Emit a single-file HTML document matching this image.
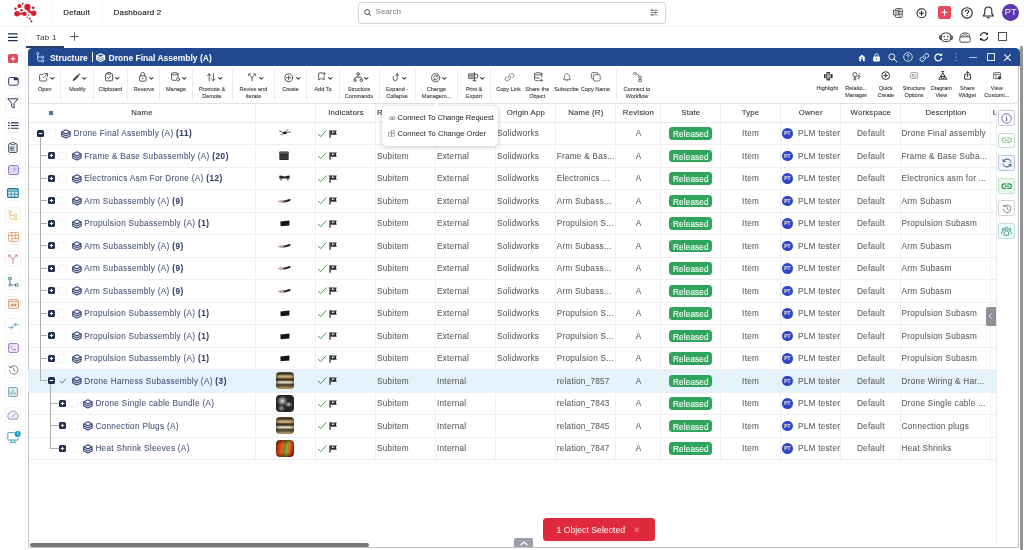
<!DOCTYPE html>
<html><head><meta charset="utf-8"><title>Structure</title>
<style>
*{box-sizing:border-box;margin:0;padding:0}
html,body{width:1024px;height:550px;overflow:hidden;background:#fff}
body{position:relative;font-family:"Liberation Sans",sans-serif;color:#444;font-size:8.2px}
#app{position:absolute;left:0;top:0;width:1024px;height:550px;will-change:transform}
svg{position:absolute;overflow:visible}
#top{position:absolute;left:0;top:0;width:1024px;height:26.5px;border-bottom:1px solid #f0f0f0}
#top .t{position:absolute;top:7.5px;font-size:8px;color:#1c1c1c;line-height:10px;white-space:nowrap;letter-spacing:.18px;-webkit-text-stroke:.15px #1c1c1c}
#top .vs{position:absolute;top:0;width:1px;height:25.5px;background:#f8f8f8}
#search{position:absolute;left:358.2px;top:1.5px;width:307.6px;height:22.2px;border:1px solid #d0d3d6;border-radius:3.5px}
#search span{position:absolute;left:16.4px;top:4.6px;font-size:8px;line-height:10px;color:#7a7a7a;letter-spacing:0}
#side{position:absolute;left:0;top:26.5px;width:26px;height:524px;border-right:1px solid #f1f1f1}
.sb{position:absolute;left:4.5px;width:16px;height:16px;border:1px solid #f3f3f3;border-radius:3px}
#tabs .tab{position:absolute;left:35.8px;top:32.5px;font-size:8px;line-height:10px;color:#333;letter-spacing:.25px}
#tabs .ul{position:absolute;left:26px;top:45.8px;width:38px;height:2px;background:#2b406b}
#panel{position:absolute;left:28px;top:50px;width:991px;height:497.5px;border:1px solid #bfc1c3;border-top:none;border-radius:0 0 2.5px 2.5px}
#vbar{position:absolute;left:1020.2px;top:46px;width:2.7px;height:503.5px;background:#939594;border-radius:1px}
#phead{position:absolute;left:28px;top:47.8px;width:991.5px;height:18px;background:#22498f;border-radius:4.5px 4.5px 0 0}
#phead .ttl{position:absolute;top:5.5px;font-size:8.5px;line-height:10px;font-weight:bold;color:#fff;white-space:nowrap}
#toolbar{position:absolute;left:29px;top:66px;width:990px;height:38px;border-bottom:1px solid #e2e2e6}
.tb{position:absolute;font-size:5.55px;line-height:7.1px;color:#3a3a3a;-webkit-text-stroke:.1px #3a3a3a;text-align:center;white-space:nowrap;transform:translateX(-50%)}
.tsep{position:absolute;top:3px;width:1px;height:31.5px;background:#ebebeb}
#grid{position:absolute;left:0;top:0}
.hrow{position:absolute;left:0;top:104px;height:18px;width:1000px}
.hc{position:absolute;top:0;height:18.5px;text-align:center;font-size:7.8px;letter-spacing:.17px;line-height:18.2px;color:#2e2e2e;white-space:nowrap;overflow:hidden;-webkit-text-stroke:.07px #2e2e2e}
.hsel{position:absolute;left:49px;top:6.6px;width:4px;height:4px;background:#4a7a9c;border-radius:.5px;box-shadow:0 0 0 1.6px #eef2f6}
.row{position:absolute;left:0;width:1000px;height:22.5px}
.row .c{position:absolute;top:0;height:22.5px;text-align:center;line-height:24.8px;font-size:8.2px;letter-spacing:.26px;color:#5e5e5e;-webkit-text-stroke:.08px #5e5e5e;white-space:nowrap;overflow:hidden}
.row .c.l{text-align:left;padding-left:1px}
.row.sel .c{background:#e4f3fb}
.exp{top:7.9px}
.exp i{position:absolute;left:1.7px;top:2.95px;width:3.6px;height:1.1px;background:#fff}
.exp i.pl:after{content:"";position:absolute;left:1.25px;top:-1.25px;width:1.1px;height:3.6px;background:#fff}
.cb{position:absolute;top:7px;width:8.8px;height:8.8px;border:1px solid #f3f3f5;border-radius:1.5px;background:#fff}
.ck{top:7.5px}
.ico{top:6.7px;color:#3f548c}
.nm{position:absolute;top:0;height:22.5px;overflow:hidden;line-height:24.8px;font-size:8.2px;letter-spacing:.3px;color:#4a5577;-webkit-text-stroke:.08px #4a5577;white-space:nowrap}
.nm b{color:#2f3c66;letter-spacing:.55px}
.ind{left:1px;top:6.5px}
.rel{display:inline-block;vertical-align:top;margin-top:5px;height:12.6px;line-height:15.6px;overflow:hidden;padding:0 3.5px;background:#2fa55b;color:#fff;border-radius:3.4px;font-size:8.2px;letter-spacing:.14px;-webkit-text-stroke:.12px #fff}
.av{position:absolute;left:1.6px;top:6.1px;width:10.6px;height:10.6px;border-radius:50%;background:#2f47c6;color:#fff;font-size:4.8px;letter-spacing:0;line-height:11.4px;text-align:center;font-weight:bold;overflow:hidden}
.ow{position:absolute;left:17.5px;top:0}
.th{display:inline-block;vertical-align:top}
.t1{width:9px;height:4px;background:#333;border-radius:2px;margin-top:9px}
.t2{width:9px;height:8px;background:#2a2a2a;border-radius:1px;margin-top:7px}
.t3{width:10px;height:4px;background:#2a2a2a;border-radius:1px;margin-top:9px}
.t4{width:10px;height:3px;background:#222;border-radius:2px;transform:rotate(-12deg);margin-top:10px}
.t5{width:9px;height:5px;background:#111;border-radius:1px;margin-top:9px}
.p1,.p2,.p3{position:absolute;left:20.1px;top:2.6px;width:18px;height:17.2px;border-radius:4px}
.p1{background:linear-gradient(90deg,rgba(40,30,20,.45) 0%,rgba(0,0,0,0) 22%,rgba(0,0,0,0) 78%,rgba(40,30,20,.4) 100%),linear-gradient(180deg,#5a4a36 0%,#3a2e22 12%,#b9a56e 22%,#cdb87e 30%,#5a3a28 40%,#3a2a22 48%,#e8e0c8 58%,#cfc8b0 64%,#4a4030 74%,#6a5a38 84%,#b89c66 94%,#98804e 100%)}
.p2{background:radial-gradient(ellipse at 35% 35%,#e8e8e8 0%,#8a8a8a 14%,rgba(40,40,40,0) 32%),radial-gradient(ellipse at 70% 55%,#bdbdbd 0%,rgba(60,60,60,0) 22%),radial-gradient(ellipse at 30% 78%,#9a9a9a 0%,rgba(60,60,60,0) 20%),#262626}
.p3{background:linear-gradient(180deg,rgba(30,10,0,.5) 0%,rgba(0,0,0,0) 25%,rgba(0,0,0,0) 75%,rgba(30,10,0,.55) 100%),linear-gradient(100deg,#5a1a0a 0%,#c83a10 20%,#e85a1a 35%,#6a8a2a 50%,#8ab03a 58%,#e8601a 72%,#b8300a 85%,#4a1408 100%)}
.vl{position:absolute;top:104px;width:1px;height:355.5px;background:#f0f0f4}
.hl{position:absolute;left:29px;width:967px;height:1px;background:#ededf2}
.rb{position:absolute;left:998.3px;width:16.7px;height:15.8px;border:.9px solid #999;border-radius:2.2px;background:#fff}
.tl{position:absolute;background:#adadad}
#dd{position:absolute;left:381.6px;top:105.5px;width:116.3px;height:40.6px;background:#fff;border-radius:4.5px;box-shadow:0 1px 5px rgba(0,0,0,.22),0 0 1px rgba(0,0,0,.15)}
#dd .it{position:absolute;left:16px;font-size:7.5px;line-height:10px;color:#333;white-space:nowrap;-webkit-text-stroke:.07px #333}
#toast{position:absolute;left:543px;top:518.3px;width:111.8px;height:22.5px;background:#e0293b;border-radius:3.5px;color:#fff;font-size:8.7px;line-height:25.6px;overflow:hidden;letter-spacing:0}

</style></head>
<body>
<div id="app">
<svg width="0" height="0" style="position:absolute">
<defs>
<g id="layers" fill="none" stroke-linejoin="round" stroke-linecap="round">
<path d="M11 1.8 L19.6 6 Q20.4 6.5 20.4 7.4 V14.8 Q20.4 15.7 19.6 16.2 L11 20.4 L2.4 16.2 Q1.6 15.7 1.6 14.8 V7.4 Q1.6 6.5 2.4 6 Z"/>
<path d="M2 6.8 L11 11 L20 6.8"/>
<path d="M1.8 11.2 L11 15.6 L20.2 11.2"/>
</g>
<g id="ind">
<path d="M1.3 5.2 L3.8 7.6 L9 1.8" fill="none" stroke="#3f9d45" stroke-width="1" stroke-linecap="round" stroke-linejoin="round"/>
<path d="M13 1.2 V8.8" stroke="#2a2a2a" stroke-width="1.3" fill="none"/>
<path d="M13.4 1.4 H19.8 L18.9 3.5 L19.8 5.8 H13.4 Z" fill="#2a2a2a"/>
<rect x="15" y="2.5" width="1.6" height="1.6" fill="#fff"/>
<rect x="16.6" y="2.5" width="1.4" height=".8" fill="#888"/>
</g>
<path id="chev" d="M0.6 0.6 L2.3 2.2 L4 0.6" fill="none" stroke="#3c3c3c" stroke-width="1.05" stroke-linecap="round" stroke-linejoin="round"/>
</defs>
</svg>
<div id="top">
<div class="vs" style="left:51px"></div><div class="vs" style="left:102px"></div>
<svg style="left:8px;top:0" width="50" height="27" viewBox="0 0 50 27">
<g fill="#d5212f">
<circle cx="11.5" cy="6.1" r="2.1"/>
<ellipse cx="19.4" cy="7" rx="3.1" ry="3.3"/>
<circle cx="9" cy="13.7" r="2.7"/>
<circle cx="16.4" cy="13.7" r="2.3"/>
<rect x="9" y="12.7" width="7.4" height="2"/>
<circle cx="25.7" cy="13.2" r="2.7"/>
<path d="M20 8.5 L24.5 12 L23 14 L18.5 10 Z"/>
</g>
<g fill="#a8203a">
<circle cx="14.7" cy="3.8" r="1"/>
<circle cx="7.6" cy="8.8" r="1.2"/>
<circle cx="13.5" cy="10.3" r="1.2"/>
<circle cx="25.2" cy="7.8" r="1.3"/>
<circle cx="20.3" cy="12.5" r=".6"/>
<circle cx="20.8" cy="15" r=".7"/>
<circle cx="19.1" cy="17.2" r=".7"/>
<circle cx="21.8" cy="18.4" r="1"/>
<circle cx="23.3" cy="21.3" r="1.1"/>
</g></svg>
<div class="t" style="left:63.2px">Default</div>
<div class="t" style="left:113.6px">Dashboard 2</div>
<div id="search"><svg style="left:5px;top:6.6px" width="7.4" height="7.4" viewBox="0 0 7.4 7.4"><circle cx="3.1" cy="3.1" r="2.45" fill="none" stroke="#3a4a66" stroke-width=".95"/><path d="M4.9 4.9 L6.7 6.7" stroke="#3a4a66" stroke-width=".95" stroke-linecap="round"/></svg><span>Search</span>
<svg style="left:290.6px;top:6.6px" width="8" height="7" viewBox="0 0 8 7"><g stroke="#4a5060" stroke-width=".7" fill="none"><path d="M0.3 1.2H7.7M0.3 3.5H7.7M0.3 5.8H7.7"/><path d="M2.2 .3V2.1M5.4 2.6V4.4M2.2 4.9V6.7" stroke-width="1"/></g></svg></div>
<svg style="left:893px;top:8px" width="10" height="10" viewBox="0 0 10 10"><g fill="none" stroke="#444" stroke-width=".9"><rect x="2.5" y=".6" width="6.8" height="8.8" rx=".8"/><rect x=".6" y="2.3" width="4.6" height="4.6" fill="#fff"/><path d="M5.2 3.5H9.3M5.2 6.3H9.3M6.8 .6V9.4M1.8 3.4L4 5.8M4 3.4L1.8 5.8" stroke-width=".7"/></g></svg>
<svg style="left:916px;top:7.5px" width="11" height="11" viewBox="0 0 11 11"><circle cx="5.5" cy="5.3" r="4.5" fill="none" stroke="#222" stroke-width="1.1"/><path d="M5.5 2.8V7.8M3 5.3H8" stroke="#222" stroke-width="1.1"/></svg>
<div style="position:absolute;left:937.7px;top:6px;width:13px;height:12.5px;background:#e8485c;border-radius:2px"></div>
<svg style="left:937.7px;top:6px" width="13" height="12.5" viewBox="0 0 13 12.5"><path d="M6.5 3.2V9.4M3.4 6.3H9.6" stroke="#fff" stroke-width="1.1"/></svg>
<svg style="left:960.5px;top:6.7px" width="12" height="12" viewBox="0 0 12 12"><circle cx="6" cy="5.9" r="5.2" fill="none" stroke="#222" stroke-width="1.1"/><path d="M4.3 4.7C4.3 3.6 5.1 3 6 3C6.9 3 7.7 3.6 7.7 4.5C7.7 5.6 6 5.7 6 7" fill="none" stroke="#222" stroke-width="1.1"/><circle cx="6" cy="8.6" r=".7" fill="#222"/></svg>
<svg style="left:982.2px;top:5.8px" width="12.6" height="13.6" viewBox="0 0 12 13"><path d="M6 .9C3.7 .9 2.6 2.7 2.6 4.6V7.3L1.2 9.6H10.8L9.4 7.3V4.6C9.4 2.7 8.3 .9 6 .9Z" fill="none" stroke="#222" stroke-width="1" stroke-linejoin="round"/><path d="M4.8 10.6C5 11.6 7 11.6 7.2 10.6" fill="none" stroke="#222" stroke-width="1"/></svg>
<div style="position:absolute;left:1002.3px;top:4px;width:17px;height:17px;border-radius:50%;background:#5b36b6;color:#fff;font-size:9.2px;line-height:17.6px;text-align:center;letter-spacing:.1px">PT</div>
</div>
<div id="side"></div>
<svg style="left:8px;top:33px" width="10" height="9" viewBox="0 0 10 9"><path d="M0 .9H9.6M0 4.3H9.6M0 7.7H9.6" stroke="#1f2d4e" stroke-width="1.3"/></svg>
<div style="position:absolute;left:7.6px;top:53.5px;width:10px;height:9.6px;background:#e0475b;border-radius:1.8px"></div><svg style="left:7.6px;top:53.5px" width="10" height="9.6" viewBox="0 0 10 9.6"><path d="M5 2.4V7.2M2.6 4.8H7.4" stroke="#fff" stroke-width="1"/></svg>
<div class="sb" style="top:72.5px"></div>
<div class="sb" style="top:95px"></div>
<div class="sb" style="top:117px"></div>
<div class="sb" style="top:139px"></div>
<div class="sb" style="top:162px"></div>
<div class="sb" style="top:185px"></div>
<div class="sb" style="top:207px"></div>
<div class="sb" style="top:229px"></div>
<div class="sb" style="top:251px"></div>
<div class="sb" style="top:274px"></div>
<div class="sb" style="top:296px"></div>
<div class="sb" style="top:318px"></div>
<div class="sb" style="top:340px"></div>
<div class="sb" style="top:362px"></div>
<div class="sb" style="top:384px"></div>
<div class="sb" style="top:407px"></div>
<div class="sb" style="top:429px"></div>
<svg style="left:7.5px;top:76.5px" width="11" height="9" viewBox="0 0 11 9"><rect x=".6" y=".6" width="9.6" height="7.6" rx="1.6" fill="none" stroke="#1f2d4e" stroke-width=".95"/><path d="M5.8 1H8.8Q9.8 1 9.8 2V3.2H5.8Z" fill="#1f2d4e"/></svg>
<svg style="left:7px;top:98px" width="12" height="11" viewBox="0 0 12 11"><path d="M.8 .8H11L7.1 5.4V10L4.7 8.6V5.4Z" fill="none" stroke="#1f2d4e" stroke-width=".95" stroke-linejoin="round"/></svg>
<svg style="left:7.5px;top:121.5px" width="11" height="7" viewBox="0 0 11 7"><path d="M3 .8H10.6M3 3.5H10.6M3 6.2H10.6" stroke="#1f2d4e" stroke-width="1.15"/><path d="M0 .8H1.6M0 3.5H1.6M0 6.2H1.6" stroke="#1f2d4e" stroke-width="1.15"/></svg>
<svg style="left:8px;top:141.5px" width="10" height="11" viewBox="0 0 10 11"><rect x=".7" y="1.6" width="8.4" height="8.8" rx="1" fill="#e9eef2" stroke="#3a4858" stroke-width="1"/><rect x="3" y=".5" width="3.8" height="2" rx=".5" fill="#fff" stroke="#3a4858" stroke-width=".8"/><path d="M2.8 4.6V8.2M2.8 5H6.8M2.8 6.6H5.8M2.8 8.2H6.8" stroke="#3a4858" stroke-width=".8" fill="none"/></svg>
<svg style="left:7.5px;top:165px" width="11" height="10" viewBox="0 0 11 10"><rect x=".6" y=".6" width="9.8" height="8.8" rx="1.3" fill="#ede6fa" stroke="#8a6fc4" stroke-width="1"/><path d="M2.4 3.1H3.4M4.8 3.1H8.6M2.4 5H3.4M4.8 5H8.6M2.4 6.9H3.4M4.8 6.9H7" stroke="#8a6fc4" stroke-width=".65"/></svg>
<svg style="left:7.3px;top:188px" width="12" height="10" viewBox="0 0 12 10"><rect x=".6" y=".6" width="10.6" height="8.8" rx="1" fill="#d9f1f8" stroke="#22789a" stroke-width="1.1"/><path d="M.6 3.2H11.2M.6 6.2H11.2M4.2 3.2V9.4M7.8 3.2V9.4" stroke="#22789a" stroke-width=".75"/><rect x=".6" y=".6" width="10.6" height="2.6" fill="#22789a" opacity=".3"/></svg>
<svg style="left:8px;top:209.5px" width="10" height="11" viewBox="0 0 10 11"><g fill="none" stroke="#dcb752" stroke-width=".75"><circle cx="1.9" cy="1.8" r="1.2"/><circle cx="7.6" cy="5.4" r="1.2"/><circle cx="7.6" cy="9" r="1.2"/><path d="M1.9 3V7.6Q1.9 9 3.4 9H6.4M1.9 4Q1.9 5.4 3.4 5.4H6.4"/></g></svg>
<svg style="left:7.5px;top:232px" width="11" height="10" viewBox="0 0 11 10"><g fill="none" stroke="#d98c52" stroke-width=".75"><rect x=".6" y=".6" width="9.8" height="8.8" rx="1"/><path d="M.6 3.4H10.4M3.8 .6V9.4M7.2 .6V6.4M3.8 6.4H10.4"/></g></svg>
<svg style="left:8px;top:254px" width="10" height="10" viewBox="0 0 10 10"><g fill="none" stroke="#c14d8c" stroke-width=".75" stroke-linecap="round"><path d="M5 9.4V5.6L1.6 1.6M5 5.6L8.4 1.6"/><path d="M.8 3V1H2.8M9.2 3V1H7.2" stroke-width=".7"/></g></svg>
<svg style="left:7.6px;top:277px" width="11" height="10" viewBox="0 0 11 10"><g fill="none" stroke="#24707f" stroke-width=".75"><rect x=".8" y=".6" width="2.4" height="2.2"/><circle cx="2" cy="8" r="1.2"/><rect x="7.6" y="6.9" width="2.4" height="2.2"/><path d="M2 2.8V6.8M3.2 8H7.6"/></g></svg>
<svg style="left:7.5px;top:299px" width="11" height="10" viewBox="0 0 11 10"><rect x=".6" y=".6" width="9.8" height="8.8" rx="1" fill="#fbefe4" stroke="#c98d62" stroke-width=".85"/><path d="M.6 2.6H10.4" stroke="#c98d62" stroke-width=".75"/><path d="M5.5 6C4.6 4.8 3 4.9 3 6C3 7.1 4.6 7.2 5.5 6C6.4 4.8 8 4.9 8 6C8 7.1 6.4 7.2 5.5 6Z" fill="none" stroke="#b7682f" stroke-width=".8"/></svg>
<svg style="left:7.5px;top:321px" width="11" height="10" viewBox="0 0 11 10"><g fill="none" stroke="#3b9bb5" stroke-width=".75" stroke-linecap="round" stroke-linejoin="round"><path d="M.6 6.6H4.6M3 5L4.6 6.6L3 8.2"/><path d="M10.4 3.4H6.4M8 1.8L6.4 3.4L8 5"/><path d="M4.8 6.4L6.2 3.6" stroke-width=".6"/></g></svg>
<svg style="left:7.5px;top:343px" width="11" height="10" viewBox="0 0 11 10"><rect x=".6" y=".6" width="9.8" height="8.8" rx="1.6" fill="#f1e9f8" stroke="#8b5fb3" stroke-width=".85"/><path d="M2.8 3.2L4 4.2L2.8 5.2M4.6 6.6H8" fill="none" stroke="#8b5fb3" stroke-width=".8"/></svg>
<svg style="left:7.5px;top:365px" width="11" height="10" viewBox="0 0 11 10"><g fill="none" stroke="#555" stroke-width=".75" stroke-linecap="round"><path d="M2 2.6A4.3 4.3 0 1 1 1.4 5.6"/><path d="M.8 1.2L2 2.8L3.8 2.2"/><path d="M5.6 2.8V5.2L7.2 6.2"/></g></svg>
<svg style="left:7.8px;top:387px" width="10" height="10" viewBox="0 0 10 10"><rect x=".6" y=".6" width="8.8" height="8.8" rx=".6" fill="#e6f3f3" stroke="#3b8a8c" stroke-width=".75"/><path d="M3 7.6V4.6M5 7.6V2.6M7 7.6V5.6" stroke="#3b8a8c" stroke-width=".75"/></svg>
<svg style="left:7.3px;top:410.5px" width="12" height="9" viewBox="0 0 12 9"><path d="M2 8.2A5 5 0 1 1 10 8.2Z" fill="#f0ebf8" stroke="#8a6ab3" stroke-width=".75" stroke-linejoin="round"/><path d="M5.4 6L8 3.2" stroke="#8a6ab3" stroke-width=".75" stroke-linecap="round"/></svg>
<svg style="left:6.5px;top:430px" width="14" height="14" viewBox="0 0 14 14"><g fill="none" stroke="#129dbe" stroke-width=".85"><path d="M7.6 2.6H1.6Q.8 2.6 .8 3.4V9.2Q.8 10 1.6 10H10.4Q11.2 10 11.2 9.2V7.8"/><path d="M4.4 10V12M7.6 10V12M2.8 12.4H9.2"/></g><circle cx="10.6" cy="4" r="3" fill="#129dbe"/><path d="M10.6 2.2V4.2L11.8 4.8" stroke="#fff" stroke-width=".7" fill="none"/></svg>
<div id="tabs"><div class="tab">Tab 1</div><div class="ul"></div>
<svg style="left:69.5px;top:31.5px" width="9" height="9" viewBox="0 0 9 9"><path d="M4.5 .3V8.7M.3 4.5H8.7" stroke="#333" stroke-width=".8"/></svg>
<svg style="left:938.5px;top:31.5px" width="14" height="11" viewBox="0 0 14 11"><g fill="none" stroke="#333" stroke-width="1"><rect x="2.4" y="1" width="9.2" height="8.6" rx="3.2"/><path d="M2.4 3.6C1 3.6 .7 4.6 .7 5.4C.7 6.2 1 7.2 2.4 7.2M11.6 3.6C13 3.6 13.3 4.6 13.3 5.4C13.3 6.2 13 7.2 11.6 7.2" stroke-width="1.4"/><path d="M5 7C6 8 8 8 9 7" stroke-width=".8"/></g><circle cx="5.2" cy="4.6" r=".8" fill="#333"/><circle cx="8.8" cy="4.6" r=".8" fill="#333"/></svg>
<svg style="left:958.5px;top:31.5px" width="12" height="11" viewBox="0 0 12 11"><g fill="none" stroke="#444" stroke-width="1"><path d="M1 5.2C1 2.6 3 .9 6 .9C9 .9 11 2.6 11 5.2"/><path d="M2.6 4.8C3 3.4 4.4 2.8 6 2.8C7.6 2.8 9 3.4 9.4 4.8" stroke-width=".7"/><rect x=".8" y="4.8" width="10.4" height="5.4" rx="1.6"/></g></svg>
<svg style="left:978.5px;top:32.3px" width="10" height="9" viewBox="0 0 10 9"><g fill="none" stroke="#222" stroke-width="1.15" stroke-linecap="round"><path d="M1.3 3.6A3.8 3.8 0 0 1 8.2 2.4"/><path d="M8.7 5.4A3.8 3.8 0 0 1 1.8 6.6"/></g><path d="M6.4 2.6H9V0.2Z" fill="#222"/><path d="M3.6 6.4H1V8.8Z" fill="#222"/></svg>
<div style="position:absolute;left:998px;top:32.3px;width:9.2px;height:9.2px;border:.9px solid #484848;border-radius:.8px"></div>
</div>
<div id="panel"></div>
<div id="vbar"></div>
<div id="phead">
<svg style="left:7.8px;top:4.3px" width="9" height="11" viewBox="0 0 9 11"><g fill="none" stroke="#d6e4ff" stroke-width=".85"><circle cx="1.7" cy="1.6" r="1.15"/><circle cx="6.7" cy="5.2" r="1.15"/><circle cx="6.7" cy="9" r="1.15"/><path d="M1.7 2.8V8Q1.7 9 2.7 9H5.5M1.7 4.2Q1.7 5.2 2.7 5.2H5.5"/></g></svg>
<div class="ttl" style="left:21.9px">Structure</div>
<div style="position:absolute;left:63.9px;top:4.2px;width:1.1px;height:10.5px;background:#fff"></div>
<svg style="left:68px;top:5.5px;color:#fff" width="9.2" height="9.2" viewBox="0 0 22 22"><use href="#layers" stroke="#fff" stroke-width="2.9"/></svg>
<div class="ttl" style="left:80.6px">Drone Final Assembly (A)</div>
<svg style="left:829.8px;top:6px" width="8" height="8" viewBox="0 0 8 8"><path d="M4 .5L.3 3.9H1.3V7.3H3.1V5H4.9V7.3H6.7V3.9H7.7Z" fill="#fff"/><rect x="3.4" y="3.2" width="1.2" height="1.2" fill="#22498f"/></svg>
<svg style="left:845.4px;top:5.6px" width="7" height="9" viewBox="0 0 7 9"><rect x=".2" y="3.6" width="6.6" height="5" rx=".8" fill="#fff"/><path d="M1.8 3.8V2.5A1.7 1.7 0 0 1 5.2 2.5V3.8" fill="none" stroke="#fff" stroke-width="1"/><circle cx="3.5" cy="6" r=".8" fill="#22498f"/></svg>
<svg style="left:859.5px;top:5px" width="10" height="10" viewBox="0 0 10 10"><circle cx="3.8" cy="3.8" r="3" fill="none" stroke="#fff" stroke-width=".9"/><path d="M6 6L9 9" stroke="#fff" stroke-width="1" stroke-linecap="round"/></svg>
<svg style="left:875px;top:4px" width="10" height="10" viewBox="0 0 10 10"><circle cx="5" cy="5" r="4.3" fill="none" stroke="#fff" stroke-width=".8"/><path d="M3.8 4C3.8 3.1 4.4 2.7 5 2.7C5.7 2.7 6.2 3.1 6.2 3.8C6.2 4.7 5 4.7 5 5.8" fill="none" stroke="#fff" stroke-width=".8"/><circle cx="5" cy="7.1" r=".5" fill="#fff"/></svg>
<svg style="left:890.5px;top:5px" width="11" height="9" viewBox="0 0 11 9"><g fill="none" stroke="#fff" stroke-width=".9" stroke-linecap="round"><path d="M4.6 5.6A1.9 1.9 0 0 1 4.4 3L6.4 1.2A1.9 1.9 0 0 1 9.2 4L8.4 4.8"/><path d="M6.2 3.4A1.9 1.9 0 0 1 6.4 6L4.4 7.8A1.9 1.9 0 0 1 1.6 5L2.4 4.2"/></g></svg>
<svg style="left:906px;top:4.8px" width="9" height="9" viewBox="0 0 9 9"><path d="M7.6 5.2A3.4 3.4 0 1 1 6.6 2" fill="none" stroke="#fff" stroke-width="1.2" stroke-linecap="round"/><path d="M5.2 2.8H8.2V0Z" fill="#fff"/></svg>
<svg style="left:926.8px;top:5.2px" width="2" height="9" viewBox="0 0 2 9"><circle cx="1" cy="1" r=".6" fill="#c6d3ee"/><circle cx="1" cy="4.2" r=".6" fill="#c6d3ee"/><circle cx="1" cy="7.4" r=".6" fill="#c6d3ee"/></svg>
<div style="position:absolute;left:941.2px;top:8.8px;width:8.3px;height:.9px;background:#b9c8e6"></div>
<div style="position:absolute;left:958.8px;top:5.6px;width:8.2px;height:7.6px;border:1px solid #e6edfa"></div>
<svg style="left:976.4px;top:6px" width="7" height="7" viewBox="0 0 7 7"><path d="M.6 .6L6.4 6.4M6.4 .6L.6 6.4" stroke="#fff" stroke-width="1.05" stroke-linecap="round"/></svg>
</div>
<div id="toolbar">
<div class="tsep" style="left:31.1px"></div>
<div class="tsep" style="left:64.1px"></div>
<div class="tsep" style="left:98.0px"></div>
<div class="tsep" style="left:130.3px"></div>
<div class="tsep" style="left:163.1px"></div>
<div class="tsep" style="left:203.1px"></div>
<div class="tsep" style="left:244.8px"></div>
<div class="tsep" style="left:277.0px"></div>
<div class="tsep" style="left:309.8px"></div>
<div class="tsep" style="left:349.5px"></div>
<div class="tsep" style="left:386.1px"></div>
<div class="tsep" style="left:428.0px"></div>
<div class="tsep" style="left:461.1px"></div>
<div class="tsep" style="left:587.1px"></div>
<svg style="left:9.8px;top:6.6px" width="9.5" height="8.5" viewBox="0 0 9.5 8.5"><g fill="none" stroke="#4a4a4a" stroke-width=".9" stroke-linecap="round" stroke-linejoin="round"><path d="M4 1.3H1.6Q.6 1.3 .6 2.3V7Q.6 8 1.6 8H6.6Q7.6 8 7.6 7V5"/><path d="M5.8 .6H8.6V3.4M8.4 .8L4.6 4.6"/></g></svg>
<svg style="left:20.8px;top:10.6px" width="4.6" height="2.8" viewBox="0 0 4.6 2.8"><use href="#chev"/></svg>
<div class="tb" style="left:15.8px;top:19.7px">Open</div>
<svg style="left:42.5px;top:6.8px" width="8.5" height="8.5" viewBox="0 0 8.5 8.5"><path d="M.7 7.9L1.1 5.9L5.6 1.4L7.2 3L2.7 7.5Z" fill="#4a4a4a"/><path d="M6.2 .9L6.9 .2L8.4 1.7L7.7 2.4Z" fill="#4a4a4a"/></svg>
<svg style="left:53.0px;top:10.6px" width="4.6" height="2.8" viewBox="0 0 4.6 2.8"><use href="#chev"/></svg>
<div class="tb" style="left:48.3px;top:19.7px">Modify</div>
<svg style="left:76.0px;top:6.3px" width="8.5" height="9.5" viewBox="0 0 8.5 9.5"><g fill="none" stroke="#4a4a4a" stroke-width=".9" stroke-linecap="round" stroke-linejoin="round"><rect x=".6" y="1.6" width="7" height="7.2" rx=".8"/><rect x="2.6" y=".5" width="3" height="1.8" rx=".4" fill="#fff"/><path d="M2.4 5.4L3.6 6.6L5.8 4"/></g></svg>
<svg style="left:86.4px;top:10.6px" width="4.6" height="2.8" viewBox="0 0 4.6 2.8"><use href="#chev"/></svg>
<div class="tb" style="left:81.3px;top:19.7px">Clipboard</div>
<svg style="left:110.0px;top:6.0px" width="7.6" height="9.8" viewBox="0 0 7.6 9.8"><g fill="none" stroke="#4a4a4a" stroke-width=".9" stroke-linecap="round" stroke-linejoin="round"><rect x=".6" y="3.8" width="6.4" height="5.4" rx=".9"/><path d="M2 3.8V2.4A1.8 1.8 0 0 1 5.6 2.4V3.8"/></g><circle cx="3.8" cy="6.5" r=".7" fill="#4a4a4a"/></svg>
<svg style="left:120.0px;top:10.6px" width="4.6" height="2.8" viewBox="0 0 4.6 2.8"><use href="#chev"/></svg>
<div class="tb" style="left:114.9px;top:19.7px">Reserve</div>
<svg style="left:141.8px;top:6.3px" width="9.4" height="9.6" viewBox="0 0 9.4 9.6"><g fill="none" stroke="#4a4a4a" stroke-width=".9" stroke-linecap="round" stroke-linejoin="round"><ellipse cx="3.8" cy="1.8" rx="3.2" ry="1.2"/><path d="M.6 1.8V7.2C.6 8 2 8.4 3.8 8.4H4.6M7 1.8V5"/><circle cx="7" cy="7.4" r="1.5"/></g></svg>
<svg style="left:152.7px;top:10.6px" width="4.6" height="2.8" viewBox="0 0 4.6 2.8"><use href="#chev"/></svg>
<div class="tb" style="left:147.0px;top:19.7px">Manage</div>
<svg style="left:178.0px;top:6.5px" width="8.8" height="8.6" viewBox="0 0 8.8 8.6"><g fill="none" stroke="#4a4a4a" stroke-width=".9" stroke-linecap="round" stroke-linejoin="round"><path d="M2.2 7.8V.8M.5 2.5L2.2 .8L3.9 2.5"/><path d="M6.4 .8V7.8M4.7 6.1L6.4 7.8L8.1 6.1"/></g></svg>
<svg style="left:188.6px;top:10.6px" width="4.6" height="2.8" viewBox="0 0 4.6 2.8"><use href="#chev"/></svg>
<div class="tb" style="left:183.0px;top:19.7px">Promote &amp;<br>Demote</div>
<svg style="left:219.2px;top:6.6px" width="8.2" height="8.4" viewBox="0 0 8.2 8.4"><g fill="none" stroke="#4a4a4a" stroke-width=".9" stroke-linecap="round" stroke-linejoin="round"><path d="M4.1 8V4.6L1.2 1.4M4.1 4.6L7 1.4"/><path d="M.6 2.8V.8H2.6M7.6 2.8V.8H5.6" stroke-width=".7"/></g></svg>
<svg style="left:229.8px;top:10.6px" width="4.6" height="2.8" viewBox="0 0 4.6 2.8"><use href="#chev"/></svg>
<div class="tb" style="left:224.4px;top:19.7px">Revise and<br>Iterate</div>
<svg style="left:255.3px;top:6.8px" width="9.4" height="9.4" viewBox="0 0 9.4 9.4"><g fill="none" stroke="#4a4a4a" stroke-width=".9" stroke-linecap="round" stroke-linejoin="round"><circle cx="4.7" cy="4.7" r="4"/><path d="M4.7 2.6V6.8M2.6 4.7H6.8"/></g></svg>
<svg style="left:266.6px;top:10.6px" width="4.6" height="2.8" viewBox="0 0 4.6 2.8"><use href="#chev"/></svg>
<div class="tb" style="left:261.5px;top:19.7px">Create</div>
<svg style="left:288.8px;top:6.3px" width="8" height="9" viewBox="0 0 8 9"><g fill="none" stroke="#4a4a4a" stroke-width=".9" stroke-linecap="round" stroke-linejoin="round"><path d="M4.4 .8H1.6Q.7 .8 .7 1.7V8L3.4 6.4L6.1 8V4.2"/><path d="M6.2 .4V3M4.9 1.7H7.5" stroke-width=".8"/></g></svg>
<svg style="left:298.8px;top:10.6px" width="4.6" height="2.8" viewBox="0 0 4.6 2.8"><use href="#chev"/></svg>
<div class="tb" style="left:294.0px;top:19.7px">Add To</div>
<svg style="left:323.6px;top:5.8px" width="10.2" height="10.4" viewBox="0 0 10.2 10.4"><g fill="none" stroke="#4a4a4a" stroke-width=".9" stroke-linecap="round" stroke-linejoin="round"><circle cx="5.1" cy="1.9" r="1.3"/><circle cx="1.9" cy="8.3" r="1.3"/><circle cx="8.3" cy="8.3" r="1.3"/><path d="M5.1 3.2V5.2M1.9 7V5.8Q1.9 5.2 2.5 5.2H7.7Q8.3 5.2 8.3 5.8V7"/></g></svg>
<svg style="left:335.4px;top:10.6px" width="4.6" height="2.8" viewBox="0 0 4.6 2.8"><use href="#chev"/></svg>
<div class="tb" style="left:330.0px;top:19.7px">Structure<br>Commands</div>
<svg style="left:363.2px;top:6.5px" width="7.6" height="8.8" viewBox="0 0 7.6 8.8"><g fill="none" stroke="#4a4a4a" stroke-width=".9" stroke-linecap="round" stroke-linejoin="round"><path d="M5.2 .8V5.6A2 2 0 0 1 1.2 5.6V3.6"/><path d="M3.5 2.5L5.2 .8L6.9 2.5"/></g></svg>
<svg style="left:373.2px;top:10.6px" width="4.6" height="2.8" viewBox="0 0 4.6 2.8"><use href="#chev"/></svg>
<div class="tb" style="left:368.0px;top:19.7px">Expand -<br>Collapse</div>
<svg style="left:401.7px;top:6.5px" width="9.6" height="9.4" viewBox="0 0 9.6 9.4"><g fill="none" stroke="#4a4a4a" stroke-width=".9" stroke-linecap="round" stroke-linejoin="round"><circle cx="4.7" cy="4.7" r="4.1"/><path d="M2.6 4.4A2.1 2.1 0 0 1 6.2 3.2M6.8 5A2.1 2.1 0 0 1 3.2 6.2" stroke-width=".8"/><path d="M6.4 2.2V3.4H5.2M3 7.2V6H4.2" stroke-width=".7"/></g></svg>
<svg style="left:413.0px;top:10.6px" width="4.6" height="2.8" viewBox="0 0 4.6 2.8"><use href="#chev"/></svg>
<div class="tb" style="left:407.5px;top:19.7px">Change<br>Managem...</div>
<svg style="left:439.0px;top:6.2px" width="10.4" height="9.6" viewBox="0 0 10.4 9.6"><g fill="#ccc" stroke="#4a4a4a" stroke-width=".8"><rect x=".5" y="1.8" width="6" height="4.8" rx=".5"/></g><g fill="none" stroke="#4a4a4a" stroke-width=".9" stroke-linecap="round" stroke-linejoin="round"><path d="M6.5 .6V8.6M5 8.8H8M6.5 2.4H9.2Q9.8 2.4 9.8 3V5.4Q9.8 6 9.2 6H6.5"/><path d="M2 3.4H5M2 4.8H5" stroke-width=".6"/></g></svg>
<svg style="left:451.0px;top:10.6px" width="4.6" height="2.8" viewBox="0 0 4.6 2.8"><use href="#chev"/></svg>
<div class="tb" style="left:445.0px;top:19.7px">Print &amp;<br>Export</div>
<svg style="left:474.6px;top:6.8px" width="11" height="8.6" viewBox="0 0 11 8.6"><g fill="none" stroke="#777" stroke-width=".9" stroke-linecap="round"><path d="M4.8 5.4A1.8 1.8 0 0 1 4.6 2.8L6.6 1.2A1.9 1.9 0 0 1 9.4 3.8L8.4 4.8"/><path d="M6.2 3.2A1.8 1.8 0 0 1 6.4 5.8L4.4 7.4A1.9 1.9 0 0 1 1.6 4.8L2.6 3.8"/></g></svg>
<div class="tb" style="left:479.5px;top:19.7px">Copy Link</div>
<svg style="left:504.7px;top:6.2px" width="9" height="10" viewBox="0 0 9 10"><g fill="none" stroke="#4a4a4a" stroke-width=".9" stroke-linecap="round" stroke-linejoin="round"><ellipse cx="4.2" cy="1.8" rx="3.6" ry="1.2"/><path d="M.6 1.8V7.6C.6 8.4 2.2 8.8 4.2 8.8M7.8 1.8V5M.6 4.8C.6 5.6 2.2 6 4.2 6H5"/><path d="M5.2 8.4H8.4M7 7L8.4 8.4L7 9.6" stroke-width=".8"/></g></svg>
<div class="tb" style="left:508.2px;top:19.7px">Share the<br>Object</div>
<svg style="left:534.3px;top:6.6px" width="8" height="8.6" viewBox="0 0 8 8.6"><g fill="none" stroke="#666" stroke-width=".85" stroke-linejoin="round"><path d="M4 .7C2.4 .7 1.6 1.9 1.6 3.3V5.1L.6 6.7H7.4L6.4 5.1V3.3C6.4 1.9 5.6 .7 4 .7Z"/><path d="M3.2 7.4C3.4 8.1 4.6 8.1 4.8 7.4"/></g></svg>
<div class="tb" style="left:537.5px;top:19.7px">Subscribe</div>
<svg style="left:562.3px;top:6.3px" width="9.8" height="9.6" viewBox="0 0 9.8 9.6"><g fill="none" stroke="#666" stroke-width=".9"><rect x=".6" y=".6" width="6.6" height="6.4" rx="1.4"/><rect x="2.6" y="2.6" width="6.6" height="6.4" rx="1.4" fill="#fff"/></g></svg>
<div class="tb" style="left:566.4px;top:19.7px">Copy Name</div>
<svg style="left:604.3px;top:5.6px" width="9.4" height="10.2" viewBox="0 0 9.4 10.2"><g fill="none" stroke="#555" stroke-width=".8"><rect x=".5" y=".6" width="3" height="1.8" rx=".9"/><path d="M3.5 1.8L6.6 4.2"/><rect x="5.6" y="4.2" width="3" height="1.8" rx=".9"/><path d="M7.1 6V7.4"/><rect x="5.6" y="7.4" width="3" height="2.2" rx=".4"/></g></svg>
<div class="tb" style="left:608.0px;top:19.7px">Connect to<br>Workflow</div>
<svg style="left:794.5px;top:5.6px" width="8.6" height="8.4" viewBox="0 0 8.6 8.4"><g fill="#333"><rect x="0" y="2.2" width="1.6" height="4"/><rect x="7" y="2.2" width="1.6" height="4"/><rect x="2.4" y="0" width="3.8" height="1.3"/><rect x="2.4" y="7.1" width="3.8" height="1.3"/></g><rect x="2.5" y="2.1" width="3.6" height="4.2" fill="none" stroke="#333" stroke-width=".8"/><path d="M2.5 2.1L6.1 6.3M6.1 2.1L2.5 6.3" stroke="#333" stroke-width=".5"/></svg>
<div class="tb" style="left:798.3px;top:18.7px">Highlight</div>
<svg style="left:822.8px;top:5.5px" width="9.4" height="8.6" viewBox="0 0 9.4 8.6"><g fill="none" stroke="#444" stroke-width=".85"><circle cx="2.9" cy="2.6" r="2.1"/><path d="M2.9 4.7V7.6M1.4 7.8H4.4M1.6 6.2H4.2"/><circle cx="7" cy="4.4" r="1"/><path d="M6.4 2.2Q7.4 1 8.6 1.6M5.6 6.4H7.4" stroke-width=".7"/></g></svg>
<div class="tb" style="left:827.2px;top:18.7px">Relatio...<br>Manager</div>
<svg style="left:851.8px;top:5.4px" width="9.4" height="9.4" viewBox="0 0 9.4 9.4"><g fill="none" stroke="#333" stroke-width="1"><circle cx="4.7" cy="4.6" r="3.9"/><path d="M4.7 2.4V6.8M2.5 4.6H6.9"/></g></svg>
<div class="tb" style="left:856.8px;top:18.7px">Quick<br>Create</div>
<svg style="left:881.0px;top:6.2px" width="8.4" height="7" viewBox="0 0 8.4 7"><rect x=".5" y=".5" width="7.2" height="6" rx=".8" fill="#f2f2f2" stroke="#999" stroke-width=".8"/><path d="M2 2.2H3.4V3.4H2Z" fill="#555"/><path d="M4.4 2.8H6.2M2 4.8H6.2" stroke="#888" stroke-width=".6"/></svg>
<div class="tb" style="left:885.0px;top:18.7px">Structure<br>Options</div>
<svg style="left:908.7px;top:5.2px" width="9.6" height="8.8" viewBox="0 0 9.6 8.8"><g fill="none" stroke="#333" stroke-width="1" stroke-linejoin="round"><path d="M3.4 .5H6.2M4.8 .5V2"/><path d="M4.8 2L7 5.4H2.6Z"/><path d="M2.6 5.4L.7 8.2H4.5Z" /><path d="M7 5.4L5.1 8.2H8.9Z"/></g></svg>
<div class="tb" style="left:912.4px;top:18.7px">Diagram<br>View</div>
<svg style="left:934.8px;top:5.4px" width="7.4" height="8.8" viewBox="0 0 7.4 8.8"><g fill="none" stroke="#333" stroke-width=".95" stroke-linecap="round" stroke-linejoin="round"><path d="M2.2 3.6H.6V8.2H6.6V3.6H5"/><path d="M3.6 5.6V.7M2 2.2L3.6 .6L5.2 2.2"/></g></svg>
<div class="tb" style="left:938.4px;top:18.7px">Share<br>Widget</div>
<svg style="left:964.2px;top:6.2px" width="9" height="7.6" viewBox="0 0 9 7.6"><g fill="none" stroke="#555" stroke-width=".8"><rect x=".5" y=".5" width="7" height="6.2" rx=".8"/><path d="M.5 2.4H7.5M3 2.4V6.7"/></g><circle cx="6.6" cy="5.8" r="1.7" fill="#444"/></svg>
<div class="tb" style="left:967.8px;top:18.7px">View<br>Customi...</div>
</div><div id="grid">
<div class="hrow">
<div class="hc" style="left:28px;width:228.0px">Name</div>
<div class="hc" style="left:256px;width:60.0px"></div>
<div class="hc" style="left:316px;width:60.0px">Indicators</div>
<div class="hc" style="left:376px;width:60.0px;text-align:left"><span style="padding-left:1px">R</span></div>
<div class="hc" style="left:436px;width:60.0px"></div>
<div class="hc" style="left:496px;width:59.7px">Origin App</div>
<div class="hc" style="left:555.7px;width:60.3px">Name (R)</div>
<div class="hc" style="left:616px;width:45.0px">Revision</div>
<div class="hc" style="left:661px;width:59.7px">State</div>
<div class="hc" style="left:720.7px;width:59.8px">Type</div>
<div class="hc" style="left:780.5px;width:60.5px">Owner</div>
<div class="hc" style="left:841px;width:59.6px">Workspace</div>
<div class="hc" style="left:900.6px;width:90.6px">Description</div>
<div class="hc" style="left:991.2px;width:8.8px;text-align:left;border-right:none"><span style="padding-left:1.6px">L</span></div>
<div class="hsel"></div>
</div>
<div class="row" style="top:122.0px">
<div class="c" style="left:28px;width:228px"></div>
<svg class="exp" style="left:37px" width="7" height="7" viewBox="0 0 7 7"><rect width="7" height="7" rx="1.6" fill="#1f2b4d"/><path d="M1.8 3.5H5.2" stroke="#fff" stroke-width="1.1"/></svg>
<span class="cb" style="left:47px"></span>
<svg class="ico" style="left:60.6px" width="9.8" height="9.8" viewBox="0 0 22 22"><use href="#layers" stroke="#3c4a7c" stroke-width="2.6"/></svg>
<span class="nm" style="left:73.4px">Drone Final Assembly (A) <b>(11)</b></span>
<div class="c" style="left:256px;width:60px"><svg style="left:22.6px;top:7px" width="12" height="8" viewBox="0 0 12 8"><path d="M.6 2.2L5.6 4L11.4 3M2.4 5.6L6 3.8L8.6 .8" stroke="#444" stroke-width=".7" fill="none"/><ellipse cx="5.8" cy="3.9" rx="1.9" ry="1.3" fill="#222"/><path d="M0 2H2.2M9.6 2.8H12M1.4 5.8H3.4M7.6 .6H9.6" stroke="#666" stroke-width=".6"/></svg></div>
<div class="c" style="left:316px;width:60px"><svg class="ind" width="22" height="10" viewBox="0 0 22 10"><use href="#ind"/></svg></div>
<div class="c l" style="left:376px;width:60px"></div>
<div class="c l" style="left:436px;width:60px"></div>
<div class="c l" style="left:496px;width:59.7px">Solidworks</div>
<div class="c l" style="left:555.7px;width:60.3px"></div>
<div class="c" style="left:616px;width:45px">A</div>
<div class="c" style="left:661px;width:59.7px"><span class="rel">Released</span></div>
<div class="c" style="left:720.7px;width:59.8px">Item</div>
<div class="c l" style="left:780.5px;width:60.5px"><span class="av">PT</span><span class="ow">PLM tester</span></div>
<div class="c" style="left:841px;width:59.6px">Default</div>
<div class="c l" style="left:900.6px;width:90.6px">Drone Final assembly</div>
<div class="c" style="left:991.2px;width:4.8px;border-right:none"></div>
</div>
<div class="row" style="top:144.5px">
<div class="c" style="left:28px;width:228px"></div>
<svg class="exp" style="left:47.9px" width="7" height="7" viewBox="0 0 7 7"><rect width="7" height="7" rx="1.6" fill="#1f2b4d"/><path d="M1.7 3.5H5.3M3.5 1.7V5.3" stroke="#fff" stroke-width="1.1"/></svg>
<span class="cb" style="left:57.9px"></span>
<svg class="ico" style="left:71.5px" width="9.8" height="9.8" viewBox="0 0 22 22"><use href="#layers" stroke="#3c4a7c" stroke-width="2.6"/></svg>
<span class="nm" style="left:84.3px">Frame &amp; Base Subassembly (A) <b>(20)</b></span>
<div class="c" style="left:256px;width:60px"><svg style="left:23.4px;top:6.6px" width="10" height="9.4" viewBox="0 0 10 9.4"><rect x=".3" y=".4" width="9.4" height="8.6" rx=".8" fill="#2e2e2e"/><rect x=".8" y=".8" width="8.4" height="2" fill="#5a5a5a"/><path d="M.6 5.2H9.4M.6 7H9.4" stroke="#555" stroke-width=".5"/></svg></div>
<div class="c" style="left:316px;width:60px"><svg class="ind" width="22" height="10" viewBox="0 0 22 10"><use href="#ind"/></svg></div>
<div class="c l" style="left:376px;width:60px">Subitem</div>
<div class="c l" style="left:436px;width:60px">External</div>
<div class="c l" style="left:496px;width:59.7px">Solidworks</div>
<div class="c l" style="left:555.7px;width:60.3px">Frame &amp; Bas...</div>
<div class="c" style="left:616px;width:45px">A</div>
<div class="c" style="left:661px;width:59.7px"><span class="rel">Released</span></div>
<div class="c" style="left:720.7px;width:59.8px">Item</div>
<div class="c l" style="left:780.5px;width:60.5px"><span class="av">PT</span><span class="ow">PLM tester</span></div>
<div class="c" style="left:841px;width:59.6px">Default</div>
<div class="c l" style="left:900.6px;width:90.6px">Frame &amp; Base Suba...</div>
<div class="c" style="left:991.2px;width:4.8px;border-right:none"></div>
</div>
<div class="row" style="top:167.0px">
<div class="c" style="left:28px;width:228px"></div>
<svg class="exp" style="left:47.9px" width="7" height="7" viewBox="0 0 7 7"><rect width="7" height="7" rx="1.6" fill="#1f2b4d"/><path d="M1.7 3.5H5.3M3.5 1.7V5.3" stroke="#fff" stroke-width="1.1"/></svg>
<span class="cb" style="left:57.9px"></span>
<svg class="ico" style="left:71.5px" width="9.8" height="9.8" viewBox="0 0 22 22"><use href="#layers" stroke="#3c4a7c" stroke-width="2.6"/></svg>
<span class="nm" style="left:84.3px">Electronics Asm For Drone (A) <b>(12)</b></span>
<div class="c" style="left:256px;width:60px"><svg style="left:23.1px;top:8.2px" width="11" height="6" viewBox="0 0 11 6"><path d="M.3 1.2Q.3 .4 1.2 .5L5.5 1.6L9.8 .5Q10.7 .4 10.7 1.2V3.4H9.4V5.4H8.4V3.4H2.6V5.4H1.6V3.4H.3Z" fill="#262626"/></svg></div>
<div class="c" style="left:316px;width:60px"><svg class="ind" width="22" height="10" viewBox="0 0 22 10"><use href="#ind"/></svg></div>
<div class="c l" style="left:376px;width:60px">Subitem</div>
<div class="c l" style="left:436px;width:60px">External</div>
<div class="c l" style="left:496px;width:59.7px">Solidworks</div>
<div class="c l" style="left:555.7px;width:60.3px">Electronics ...</div>
<div class="c" style="left:616px;width:45px">A</div>
<div class="c" style="left:661px;width:59.7px"><span class="rel">Released</span></div>
<div class="c" style="left:720.7px;width:59.8px">Item</div>
<div class="c l" style="left:780.5px;width:60.5px"><span class="av">PT</span><span class="ow">PLM tester</span></div>
<div class="c" style="left:841px;width:59.6px">Default</div>
<div class="c l" style="left:900.6px;width:90.6px">Electronics asm for ...</div>
<div class="c" style="left:991.2px;width:4.8px;border-right:none"></div>
</div>
<div class="row" style="top:189.5px">
<div class="c" style="left:28px;width:228px"></div>
<svg class="exp" style="left:47.9px" width="7" height="7" viewBox="0 0 7 7"><rect width="7" height="7" rx="1.6" fill="#1f2b4d"/><path d="M1.7 3.5H5.3M3.5 1.7V5.3" stroke="#fff" stroke-width="1.1"/></svg>
<span class="cb" style="left:57.9px"></span>
<svg class="ico" style="left:71.5px" width="9.8" height="9.8" viewBox="0 0 22 22"><use href="#layers" stroke="#3c4a7c" stroke-width="2.6"/></svg>
<span class="nm" style="left:84.3px">Arm Subassembly (A) <b>(9)</b></span>
<div class="c" style="left:256px;width:60px"><svg style="left:21.7px;top:8px" width="13.4" height="6" viewBox="0 0 13.4 6"><path d="M.4 3.4L12.8 1.8" stroke="#7a3030" stroke-width=".7"/><path d="M4.6 3.8L11.2 1L12.6 1.4L11.6 3.2L6.4 4.6Z" fill="#262626"/><path d="M1.4 4.4H6" stroke="#555" stroke-width=".5"/></svg></div>
<div class="c" style="left:316px;width:60px"><svg class="ind" width="22" height="10" viewBox="0 0 22 10"><use href="#ind"/></svg></div>
<div class="c l" style="left:376px;width:60px">Subitem</div>
<div class="c l" style="left:436px;width:60px">External</div>
<div class="c l" style="left:496px;width:59.7px">Solidworks</div>
<div class="c l" style="left:555.7px;width:60.3px">Arm Subass...</div>
<div class="c" style="left:616px;width:45px">A</div>
<div class="c" style="left:661px;width:59.7px"><span class="rel">Released</span></div>
<div class="c" style="left:720.7px;width:59.8px">Item</div>
<div class="c l" style="left:780.5px;width:60.5px"><span class="av">PT</span><span class="ow">PLM tester</span></div>
<div class="c" style="left:841px;width:59.6px">Default</div>
<div class="c l" style="left:900.6px;width:90.6px">Arm Subasm</div>
<div class="c" style="left:991.2px;width:4.8px;border-right:none"></div>
</div>
<div class="row" style="top:212.0px">
<div class="c" style="left:28px;width:228px"></div>
<svg class="exp" style="left:47.9px" width="7" height="7" viewBox="0 0 7 7"><rect width="7" height="7" rx="1.6" fill="#1f2b4d"/><path d="M1.7 3.5H5.3M3.5 1.7V5.3" stroke="#fff" stroke-width="1.1"/></svg>
<span class="cb" style="left:57.9px"></span>
<svg class="ico" style="left:71.5px" width="9.8" height="9.8" viewBox="0 0 22 22"><use href="#layers" stroke="#3c4a7c" stroke-width="2.6"/></svg>
<span class="nm" style="left:84.3px">Propulsion Subassembly (A) <b>(1)</b></span>
<div class="c" style="left:256px;width:60px"><svg style="left:23.9px;top:8.2px" width="10" height="6.6" viewBox="0 0 10 6.6"><path d="M.4 1.6L9.4 .4V5.4L.6 6.2Z" fill="#141414"/><path d="M9.4 1.6H10" stroke="#333" stroke-width=".6"/></svg></div>
<div class="c" style="left:316px;width:60px"><svg class="ind" width="22" height="10" viewBox="0 0 22 10"><use href="#ind"/></svg></div>
<div class="c l" style="left:376px;width:60px">Subitem</div>
<div class="c l" style="left:436px;width:60px">External</div>
<div class="c l" style="left:496px;width:59.7px">Solidworks</div>
<div class="c l" style="left:555.7px;width:60.3px">Propulsion S...</div>
<div class="c" style="left:616px;width:45px">A</div>
<div class="c" style="left:661px;width:59.7px"><span class="rel">Released</span></div>
<div class="c" style="left:720.7px;width:59.8px">Item</div>
<div class="c l" style="left:780.5px;width:60.5px"><span class="av">PT</span><span class="ow">PLM tester</span></div>
<div class="c" style="left:841px;width:59.6px">Default</div>
<div class="c l" style="left:900.6px;width:90.6px">Propulsion Subasm</div>
<div class="c" style="left:991.2px;width:4.8px;border-right:none"></div>
</div>
<div class="row" style="top:234.5px">
<div class="c" style="left:28px;width:228px"></div>
<svg class="exp" style="left:47.9px" width="7" height="7" viewBox="0 0 7 7"><rect width="7" height="7" rx="1.6" fill="#1f2b4d"/><path d="M1.7 3.5H5.3M3.5 1.7V5.3" stroke="#fff" stroke-width="1.1"/></svg>
<span class="cb" style="left:57.9px"></span>
<svg class="ico" style="left:71.5px" width="9.8" height="9.8" viewBox="0 0 22 22"><use href="#layers" stroke="#3c4a7c" stroke-width="2.6"/></svg>
<span class="nm" style="left:84.3px">Arm Subassembly (A) <b>(9)</b></span>
<div class="c" style="left:256px;width:60px"><svg style="left:21.7px;top:8px" width="13.4" height="6" viewBox="0 0 13.4 6"><path d="M.4 3.4L12.8 1.8" stroke="#7a3030" stroke-width=".7"/><path d="M4.6 3.8L11.2 1L12.6 1.4L11.6 3.2L6.4 4.6Z" fill="#262626"/><path d="M1.4 4.4H6" stroke="#555" stroke-width=".5"/></svg></div>
<div class="c" style="left:316px;width:60px"><svg class="ind" width="22" height="10" viewBox="0 0 22 10"><use href="#ind"/></svg></div>
<div class="c l" style="left:376px;width:60px">Subitem</div>
<div class="c l" style="left:436px;width:60px">External</div>
<div class="c l" style="left:496px;width:59.7px">Solidworks</div>
<div class="c l" style="left:555.7px;width:60.3px">Arm Subass...</div>
<div class="c" style="left:616px;width:45px">A</div>
<div class="c" style="left:661px;width:59.7px"><span class="rel">Released</span></div>
<div class="c" style="left:720.7px;width:59.8px">Item</div>
<div class="c l" style="left:780.5px;width:60.5px"><span class="av">PT</span><span class="ow">PLM tester</span></div>
<div class="c" style="left:841px;width:59.6px">Default</div>
<div class="c l" style="left:900.6px;width:90.6px">Arm Subasm</div>
<div class="c" style="left:991.2px;width:4.8px;border-right:none"></div>
</div>
<div class="row" style="top:257.0px">
<div class="c" style="left:28px;width:228px"></div>
<svg class="exp" style="left:47.9px" width="7" height="7" viewBox="0 0 7 7"><rect width="7" height="7" rx="1.6" fill="#1f2b4d"/><path d="M1.7 3.5H5.3M3.5 1.7V5.3" stroke="#fff" stroke-width="1.1"/></svg>
<span class="cb" style="left:57.9px"></span>
<svg class="ico" style="left:71.5px" width="9.8" height="9.8" viewBox="0 0 22 22"><use href="#layers" stroke="#3c4a7c" stroke-width="2.6"/></svg>
<span class="nm" style="left:84.3px">Arm Subassembly (A) <b>(9)</b></span>
<div class="c" style="left:256px;width:60px"><svg style="left:21.7px;top:8px" width="13.4" height="6" viewBox="0 0 13.4 6"><path d="M.4 3.4L12.8 1.8" stroke="#7a3030" stroke-width=".7"/><path d="M4.6 3.8L11.2 1L12.6 1.4L11.6 3.2L6.4 4.6Z" fill="#262626"/><path d="M1.4 4.4H6" stroke="#555" stroke-width=".5"/></svg></div>
<div class="c" style="left:316px;width:60px"><svg class="ind" width="22" height="10" viewBox="0 0 22 10"><use href="#ind"/></svg></div>
<div class="c l" style="left:376px;width:60px">Subitem</div>
<div class="c l" style="left:436px;width:60px">External</div>
<div class="c l" style="left:496px;width:59.7px">Solidworks</div>
<div class="c l" style="left:555.7px;width:60.3px">Arm Subass...</div>
<div class="c" style="left:616px;width:45px">A</div>
<div class="c" style="left:661px;width:59.7px"><span class="rel">Released</span></div>
<div class="c" style="left:720.7px;width:59.8px">Item</div>
<div class="c l" style="left:780.5px;width:60.5px"><span class="av">PT</span><span class="ow">PLM tester</span></div>
<div class="c" style="left:841px;width:59.6px">Default</div>
<div class="c l" style="left:900.6px;width:90.6px">Arm Subasm</div>
<div class="c" style="left:991.2px;width:4.8px;border-right:none"></div>
</div>
<div class="row" style="top:279.5px">
<div class="c" style="left:28px;width:228px"></div>
<svg class="exp" style="left:47.9px" width="7" height="7" viewBox="0 0 7 7"><rect width="7" height="7" rx="1.6" fill="#1f2b4d"/><path d="M1.7 3.5H5.3M3.5 1.7V5.3" stroke="#fff" stroke-width="1.1"/></svg>
<span class="cb" style="left:57.9px"></span>
<svg class="ico" style="left:71.5px" width="9.8" height="9.8" viewBox="0 0 22 22"><use href="#layers" stroke="#3c4a7c" stroke-width="2.6"/></svg>
<span class="nm" style="left:84.3px">Arm Subassembly (A) <b>(9)</b></span>
<div class="c" style="left:256px;width:60px"><svg style="left:21.7px;top:8px" width="13.4" height="6" viewBox="0 0 13.4 6"><path d="M.4 3.4L12.8 1.8" stroke="#7a3030" stroke-width=".7"/><path d="M4.6 3.8L11.2 1L12.6 1.4L11.6 3.2L6.4 4.6Z" fill="#262626"/><path d="M1.4 4.4H6" stroke="#555" stroke-width=".5"/></svg></div>
<div class="c" style="left:316px;width:60px"><svg class="ind" width="22" height="10" viewBox="0 0 22 10"><use href="#ind"/></svg></div>
<div class="c l" style="left:376px;width:60px">Subitem</div>
<div class="c l" style="left:436px;width:60px">External</div>
<div class="c l" style="left:496px;width:59.7px">Solidworks</div>
<div class="c l" style="left:555.7px;width:60.3px">Arm Subass...</div>
<div class="c" style="left:616px;width:45px">A</div>
<div class="c" style="left:661px;width:59.7px"><span class="rel">Released</span></div>
<div class="c" style="left:720.7px;width:59.8px">Item</div>
<div class="c l" style="left:780.5px;width:60.5px"><span class="av">PT</span><span class="ow">PLM tester</span></div>
<div class="c" style="left:841px;width:59.6px">Default</div>
<div class="c l" style="left:900.6px;width:90.6px">Arm Subasm</div>
<div class="c" style="left:991.2px;width:4.8px;border-right:none"></div>
</div>
<div class="row" style="top:302.0px">
<div class="c" style="left:28px;width:228px"></div>
<svg class="exp" style="left:47.9px" width="7" height="7" viewBox="0 0 7 7"><rect width="7" height="7" rx="1.6" fill="#1f2b4d"/><path d="M1.7 3.5H5.3M3.5 1.7V5.3" stroke="#fff" stroke-width="1.1"/></svg>
<span class="cb" style="left:57.9px"></span>
<svg class="ico" style="left:71.5px" width="9.8" height="9.8" viewBox="0 0 22 22"><use href="#layers" stroke="#3c4a7c" stroke-width="2.6"/></svg>
<span class="nm" style="left:84.3px">Propulsion Subassembly (A) <b>(1)</b></span>
<div class="c" style="left:256px;width:60px"><svg style="left:23.9px;top:8.2px" width="10" height="6.6" viewBox="0 0 10 6.6"><path d="M.4 1.6L9.4 .4V5.4L.6 6.2Z" fill="#141414"/><path d="M9.4 1.6H10" stroke="#333" stroke-width=".6"/></svg></div>
<div class="c" style="left:316px;width:60px"><svg class="ind" width="22" height="10" viewBox="0 0 22 10"><use href="#ind"/></svg></div>
<div class="c l" style="left:376px;width:60px">Subitem</div>
<div class="c l" style="left:436px;width:60px">External</div>
<div class="c l" style="left:496px;width:59.7px">Solidworks</div>
<div class="c l" style="left:555.7px;width:60.3px">Propulsion S...</div>
<div class="c" style="left:616px;width:45px">A</div>
<div class="c" style="left:661px;width:59.7px"><span class="rel">Released</span></div>
<div class="c" style="left:720.7px;width:59.8px">Item</div>
<div class="c l" style="left:780.5px;width:60.5px"><span class="av">PT</span><span class="ow">PLM tester</span></div>
<div class="c" style="left:841px;width:59.6px">Default</div>
<div class="c l" style="left:900.6px;width:90.6px">Propulsion Subasm</div>
<div class="c" style="left:991.2px;width:4.8px;border-right:none"></div>
</div>
<div class="row" style="top:324.5px">
<div class="c" style="left:28px;width:228px"></div>
<svg class="exp" style="left:47.9px" width="7" height="7" viewBox="0 0 7 7"><rect width="7" height="7" rx="1.6" fill="#1f2b4d"/><path d="M1.7 3.5H5.3M3.5 1.7V5.3" stroke="#fff" stroke-width="1.1"/></svg>
<span class="cb" style="left:57.9px"></span>
<svg class="ico" style="left:71.5px" width="9.8" height="9.8" viewBox="0 0 22 22"><use href="#layers" stroke="#3c4a7c" stroke-width="2.6"/></svg>
<span class="nm" style="left:84.3px">Propulsion Subassembly (A) <b>(1)</b></span>
<div class="c" style="left:256px;width:60px"><svg style="left:23.9px;top:8.2px" width="10" height="6.6" viewBox="0 0 10 6.6"><path d="M.4 1.6L9.4 .4V5.4L.6 6.2Z" fill="#141414"/><path d="M9.4 1.6H10" stroke="#333" stroke-width=".6"/></svg></div>
<div class="c" style="left:316px;width:60px"><svg class="ind" width="22" height="10" viewBox="0 0 22 10"><use href="#ind"/></svg></div>
<div class="c l" style="left:376px;width:60px">Subitem</div>
<div class="c l" style="left:436px;width:60px">External</div>
<div class="c l" style="left:496px;width:59.7px">Solidworks</div>
<div class="c l" style="left:555.7px;width:60.3px">Propulsion S...</div>
<div class="c" style="left:616px;width:45px">A</div>
<div class="c" style="left:661px;width:59.7px"><span class="rel">Released</span></div>
<div class="c" style="left:720.7px;width:59.8px">Item</div>
<div class="c l" style="left:780.5px;width:60.5px"><span class="av">PT</span><span class="ow">PLM tester</span></div>
<div class="c" style="left:841px;width:59.6px">Default</div>
<div class="c l" style="left:900.6px;width:90.6px">Propulsion Subasm</div>
<div class="c" style="left:991.2px;width:4.8px;border-right:none"></div>
</div>
<div class="row" style="top:347.0px">
<div class="c" style="left:28px;width:228px"></div>
<svg class="exp" style="left:47.9px" width="7" height="7" viewBox="0 0 7 7"><rect width="7" height="7" rx="1.6" fill="#1f2b4d"/><path d="M1.7 3.5H5.3M3.5 1.7V5.3" stroke="#fff" stroke-width="1.1"/></svg>
<span class="cb" style="left:57.9px"></span>
<svg class="ico" style="left:71.5px" width="9.8" height="9.8" viewBox="0 0 22 22"><use href="#layers" stroke="#3c4a7c" stroke-width="2.6"/></svg>
<span class="nm" style="left:84.3px">Propulsion Subassembly (A) <b>(1)</b></span>
<div class="c" style="left:256px;width:60px"><svg style="left:23.9px;top:8.2px" width="10" height="6.6" viewBox="0 0 10 6.6"><path d="M.4 1.6L9.4 .4V5.4L.6 6.2Z" fill="#141414"/><path d="M9.4 1.6H10" stroke="#333" stroke-width=".6"/></svg></div>
<div class="c" style="left:316px;width:60px"><svg class="ind" width="22" height="10" viewBox="0 0 22 10"><use href="#ind"/></svg></div>
<div class="c l" style="left:376px;width:60px">Subitem</div>
<div class="c l" style="left:436px;width:60px">External</div>
<div class="c l" style="left:496px;width:59.7px">Solidworks</div>
<div class="c l" style="left:555.7px;width:60.3px">Propulsion S...</div>
<div class="c" style="left:616px;width:45px">A</div>
<div class="c" style="left:661px;width:59.7px"><span class="rel">Released</span></div>
<div class="c" style="left:720.7px;width:59.8px">Item</div>
<div class="c l" style="left:780.5px;width:60.5px"><span class="av">PT</span><span class="ow">PLM tester</span></div>
<div class="c" style="left:841px;width:59.6px">Default</div>
<div class="c l" style="left:900.6px;width:90.6px">Propulsion Subasm</div>
<div class="c" style="left:991.2px;width:4.8px;border-right:none"></div>
</div>
<div class="row sel" style="top:369.5px">
<div class="c" style="left:28px;width:228px"></div>
<svg class="exp" style="left:47.9px" width="7" height="7" viewBox="0 0 7 7"><rect width="7" height="7" rx="1.6" fill="#1f2b4d"/><path d="M1.8 3.5H5.2" stroke="#fff" stroke-width="1.1"/></svg>
<svg class="ck" style="left:58.9px" width="8" height="8" viewBox="0 0 8 8"><path d="M1 4.2 L3 6.2 L7 1.6" fill="none" stroke="#555" stroke-width="0.8"/></svg>
<svg class="ico" style="left:71.5px" width="9.8" height="9.8" viewBox="0 0 22 22"><use href="#layers" stroke="#3c4a7c" stroke-width="2.6"/></svg>
<span class="nm" style="left:84.3px">Drone Harness Subassembly (A) <b>(3)</b></span>
<div class="c" style="left:256px;width:60px"><span class="th p1"></span></div>
<div class="c" style="left:316px;width:60px"><svg class="ind" width="22" height="10" viewBox="0 0 22 10"><use href="#ind"/></svg></div>
<div class="c l" style="left:376px;width:60px">Subitem</div>
<div class="c l" style="left:436px;width:60px">Internal</div>
<div class="c l" style="left:496px;width:59.7px"></div>
<div class="c l" style="left:555.7px;width:60.3px">relation_7857</div>
<div class="c" style="left:616px;width:45px">A</div>
<div class="c" style="left:661px;width:59.7px"><span class="rel">Released</span></div>
<div class="c" style="left:720.7px;width:59.8px">Item</div>
<div class="c l" style="left:780.5px;width:60.5px"><span class="av">PT</span><span class="ow">PLM tester</span></div>
<div class="c" style="left:841px;width:59.6px">Default</div>
<div class="c l" style="left:900.6px;width:90.6px">Drone Wiring &amp; Har...</div>
<div class="c" style="left:991.2px;width:4.8px;border-right:none"></div>
</div>
<div class="row" style="top:392.0px">
<div class="c" style="left:28px;width:228px"></div>
<svg class="exp" style="left:59px" width="7" height="7" viewBox="0 0 7 7"><rect width="7" height="7" rx="1.6" fill="#1f2b4d"/><path d="M1.7 3.5H5.3M3.5 1.7V5.3" stroke="#fff" stroke-width="1.1"/></svg>
<span class="cb" style="left:69px"></span>
<svg class="ico" style="left:82.6px" width="9.8" height="9.8" viewBox="0 0 22 22"><use href="#layers" stroke="#3c4a7c" stroke-width="2.6"/></svg>
<span class="nm" style="left:95.4px">Drone Single cable Bundle (A)</span>
<div class="c" style="left:256px;width:60px"><span class="th p2"></span></div>
<div class="c" style="left:316px;width:60px"><svg class="ind" width="22" height="10" viewBox="0 0 22 10"><use href="#ind"/></svg></div>
<div class="c l" style="left:376px;width:60px">Subitem</div>
<div class="c l" style="left:436px;width:60px">Internal</div>
<div class="c l" style="left:496px;width:59.7px"></div>
<div class="c l" style="left:555.7px;width:60.3px">relation_7843</div>
<div class="c" style="left:616px;width:45px">A</div>
<div class="c" style="left:661px;width:59.7px"><span class="rel">Released</span></div>
<div class="c" style="left:720.7px;width:59.8px">Item</div>
<div class="c l" style="left:780.5px;width:60.5px"><span class="av">PT</span><span class="ow">PLM tester</span></div>
<div class="c" style="left:841px;width:59.6px">Default</div>
<div class="c l" style="left:900.6px;width:90.6px">Drone Single cable ...</div>
<div class="c" style="left:991.2px;width:4.8px;border-right:none"></div>
</div>
<div class="row" style="top:414.5px">
<div class="c" style="left:28px;width:228px"></div>
<svg class="exp" style="left:59px" width="7" height="7" viewBox="0 0 7 7"><rect width="7" height="7" rx="1.6" fill="#1f2b4d"/><path d="M1.7 3.5H5.3M3.5 1.7V5.3" stroke="#fff" stroke-width="1.1"/></svg>
<span class="cb" style="left:69px"></span>
<svg class="ico" style="left:82.6px" width="9.8" height="9.8" viewBox="0 0 22 22"><use href="#layers" stroke="#3c4a7c" stroke-width="2.6"/></svg>
<span class="nm" style="left:95.4px">Connection Plugs (A)</span>
<div class="c" style="left:256px;width:60px"><span class="th p1"></span></div>
<div class="c" style="left:316px;width:60px"><svg class="ind" width="22" height="10" viewBox="0 0 22 10"><use href="#ind"/></svg></div>
<div class="c l" style="left:376px;width:60px">Subitem</div>
<div class="c l" style="left:436px;width:60px">Internal</div>
<div class="c l" style="left:496px;width:59.7px"></div>
<div class="c l" style="left:555.7px;width:60.3px">relation_7845</div>
<div class="c" style="left:616px;width:45px">A</div>
<div class="c" style="left:661px;width:59.7px"><span class="rel">Released</span></div>
<div class="c" style="left:720.7px;width:59.8px">Item</div>
<div class="c l" style="left:780.5px;width:60.5px"><span class="av">PT</span><span class="ow">PLM tester</span></div>
<div class="c" style="left:841px;width:59.6px">Default</div>
<div class="c l" style="left:900.6px;width:90.6px">Connection plugs</div>
<div class="c" style="left:991.2px;width:4.8px;border-right:none"></div>
</div>
<div class="row" style="top:437.0px">
<div class="c" style="left:28px;width:228px"></div>
<svg class="exp" style="left:59px" width="7" height="7" viewBox="0 0 7 7"><rect width="7" height="7" rx="1.6" fill="#1f2b4d"/><path d="M1.7 3.5H5.3M3.5 1.7V5.3" stroke="#fff" stroke-width="1.1"/></svg>
<span class="cb" style="left:69px"></span>
<svg class="ico" style="left:82.6px" width="9.8" height="9.8" viewBox="0 0 22 22"><use href="#layers" stroke="#3c4a7c" stroke-width="2.6"/></svg>
<span class="nm" style="left:95.4px">Heat Shrink Sleeves (A)</span>
<div class="c" style="left:256px;width:60px"><span class="th p3"></span></div>
<div class="c" style="left:316px;width:60px"><svg class="ind" width="22" height="10" viewBox="0 0 22 10"><use href="#ind"/></svg></div>
<div class="c l" style="left:376px;width:60px">Subitem</div>
<div class="c l" style="left:436px;width:60px">Internal</div>
<div class="c l" style="left:496px;width:59.7px"></div>
<div class="c l" style="left:555.7px;width:60.3px">relation_7847</div>
<div class="c" style="left:616px;width:45px">A</div>
<div class="c" style="left:661px;width:59.7px"><span class="rel">Released</span></div>
<div class="c" style="left:720.7px;width:59.8px">Item</div>
<div class="c l" style="left:780.5px;width:60.5px"><span class="av">PT</span><span class="ow">PLM tester</span></div>
<div class="c" style="left:841px;width:59.6px">Default</div>
<div class="c l" style="left:900.6px;width:90.6px">Heat Shrinks</div>
<div class="c" style="left:991.2px;width:4.8px;border-right:none"></div>
</div>
<div class="vl" style="left:255.0px"></div>
<div class="vl" style="left:315.0px"></div>
<div class="vl" style="left:375.0px"></div>
<div class="vl" style="left:435.0px"></div>
<div class="vl" style="left:495.0px"></div>
<div class="vl" style="left:554.7px"></div>
<div class="vl" style="left:615.0px"></div>
<div class="vl" style="left:660.0px"></div>
<div class="vl" style="left:719.7px"></div>
<div class="vl" style="left:779.5px"></div>
<div class="vl" style="left:840.0px"></div>
<div class="vl" style="left:899.6px"></div>
<div class="vl" style="left:990.2px"></div>
<div class="hl" style="top:121.5px;background:#e9e9ef"></div>
<div class="hl" style="top:144.0px"></div>
<div class="hl" style="top:166.5px"></div>
<div class="hl" style="top:189.0px"></div>
<div class="hl" style="top:211.5px"></div>
<div class="hl" style="top:234.0px"></div>
<div class="hl" style="top:256.5px"></div>
<div class="hl" style="top:279.0px"></div>
<div class="hl" style="top:301.5px"></div>
<div class="hl" style="top:324.0px"></div>
<div class="hl" style="top:346.5px"></div>
<div class="hl" style="top:369.0px"></div>
<div class="hl" style="top:391.5px"></div>
<div class="hl" style="top:414.0px"></div>
<div class="hl" style="top:436.5px"></div>
<div class="hl" style="top:459.0px"></div>
</div><div class="tl" style="left:40.1px;top:137px;width:.8px;height:243.8px"></div>
<div class="tl" style="left:40.1px;top:155.30px;width:7px;height:.8px"></div>
<div class="tl" style="left:40.1px;top:177.80px;width:7px;height:.8px"></div>
<div class="tl" style="left:40.1px;top:200.30px;width:7px;height:.8px"></div>
<div class="tl" style="left:40.1px;top:222.80px;width:7px;height:.8px"></div>
<div class="tl" style="left:40.1px;top:245.30px;width:7px;height:.8px"></div>
<div class="tl" style="left:40.1px;top:267.80px;width:7px;height:.8px"></div>
<div class="tl" style="left:40.1px;top:290.30px;width:7px;height:.8px"></div>
<div class="tl" style="left:40.1px;top:312.80px;width:7px;height:.8px"></div>
<div class="tl" style="left:40.1px;top:335.30px;width:7px;height:.8px"></div>
<div class="tl" style="left:40.1px;top:357.80px;width:7px;height:.8px"></div>
<div class="tl" style="left:40.1px;top:380.30px;width:7px;height:.8px"></div>
<div class="tl" style="left:49.9px;top:384.2px;width:.8px;height:64.0px"></div>
<div class="tl" style="left:49.9px;top:402.80px;width:9.5px;height:.8px"></div>
<div class="tl" style="left:49.9px;top:425.30px;width:9.5px;height:.8px"></div>
<div class="tl" style="left:49.9px;top:447.80px;width:9.5px;height:.8px"></div>
<div class="rb" style="top:110.1px;border-color:#cdbfe2;background:#fff"></div>
<svg style="left:1001.0999999999999px;top:112.7px" width="11" height="11" viewBox="0 0 10 10"><circle cx="5" cy="5" r="4.3" fill="none" stroke="#5b4a86" stroke-width=".75"/><path d="M5 4.4V7.2" stroke="#5b4a86" stroke-width=".9"/><circle cx="5" cy="3" r=".55" fill="#5b4a86"/></svg>
<div class="rb" style="top:132.7px;border-color:#bfdfc5;background:#fff"></div>
<svg style="left:1000.9px;top:137.4px" width="11.4" height="6.4" viewBox="0 0 11.4 6.4"><g fill="none" stroke="#57a866" stroke-width=".85" stroke-linecap="round"><path d="M4.7 .9H3.3A2.3 2.3 0 0 0 3.3 5.5H4.7M6.7 .9H8.1A2.3 2.3 0 0 1 8.1 5.5H6.7M3.9 3.2H7.5"/></g></svg>
<div class="rb" style="top:155.3px;border-color:#b4c6e4;background:#f1f5fc"></div>
<svg style="left:1001.5px;top:158.2px" width="10" height="10" viewBox="0 0 10 10"><g fill="none" stroke="#27385c" stroke-width=".9" stroke-linecap="round"><path d="M1.2 3.6A4 4 0 0 1 7.6 1.8M8.8 6.4A4 4 0 0 1 2.4 8.2"/><path d="M.8 1.4L1.2 3.8L3.4 3.2M9.2 8.6L8.8 6.2L6.6 6.8" stroke-width=".7"/><path d="M8.6 2.6A4 4 0 0 1 9 4.4M1.4 7.4A4 4 0 0 1 1 5.6" stroke-width=".7"/></g></svg>
<div class="rb" style="top:177.8px;border-color:#c4e4cb;background:#e9f7ed"></div>
<svg style="left:1000.9px;top:182.5px" width="11.4" height="6.4" viewBox="0 0 11.4 6.4"><g fill="none" stroke="#2f9a4a" stroke-width="1.25" stroke-linecap="round"><path d="M4.7 .9H3.3A2.3 2.3 0 0 0 3.3 5.5H4.7M6.7 .9H8.1A2.3 2.3 0 0 1 8.1 5.5H6.7M3.9 3.2H7.5"/></g></svg>
<div class="rb" style="top:200.4px;border-color:#d4d4d4;background:#fff"></div>
<svg style="left:1001.5px;top:203.50000000000003px" width="10" height="10" viewBox="0 0 10 10"><g fill="none" stroke="#666" stroke-width=".8" stroke-linecap="round"><path d="M2 2.4A3.9 3.9 0 1 1 1.2 5.2"/><path d="M1 1.2L2 2.6L3.6 2.2"/><path d="M5.2 2.8V5L6.6 5.8"/></g></svg>
<div class="rb" style="top:223.0px;border-color:#b9e0db;background:#eef9f8"></div>
<svg style="left:1001.0999999999999px;top:226.10000000000002px" width="11" height="10" viewBox="0 0 11 10"><g fill="none" stroke="#2a8a80" stroke-width=".8"><circle cx="5.5" cy="2.6" r="1.5"/><circle cx="2.2" cy="3.4" r="1.1"/><circle cx="8.8" cy="3.4" r="1.1"/><path d="M3.2 9.2V7.2Q3.2 5 5.5 5Q7.8 5 7.8 7.2V9.2ZM.6 8V6.8Q.6 5.4 2.2 5.4M10.4 8V6.8Q10.4 5.4 8.8 5.4"/></g></svg>
<div style="position:absolute;left:986px;top:306.9px;width:9.5px;height:18.8px;background:#8c9097;border-radius:2px 0 0 2px"></div>
<svg style="left:988.4px;top:313.3px" width="4.4" height="6.2" viewBox="0 0 5 7"><path d="M3.8 .8L1.2 3.5L3.8 6.2" fill="none" stroke="#fff" stroke-width=".9" stroke-linecap="round" stroke-linejoin="round"/></svg>
<div style="position:absolute;left:995.6px;top:104px;width:1px;height:440px;background:#ededf0"></div>
<svg style="left:431.8px;top:102.2px" width="9" height="4" viewBox="0 0 9 4"><path d="M0 4L4.5 0L9 4Z" fill="#fff" stroke="#e3e3e3" stroke-width=".4"/></svg>
<div id="dd">
<svg style="left:7.2px;top:10.4px" width="6.4" height="4.4" viewBox="0 0 6.4 4.4"><g fill="none" stroke="#777" stroke-width=".7"><rect x=".4" y=".9" width="3.4" height="2.6" rx="1.2"/><rect x="2.6" y=".9" width="3.4" height="2.6" rx="1.2"/></g></svg>
<div class="it" style="top:7.4px">Connect To Change Request</div>
<svg style="left:6.8px;top:24.8px" width="6.6" height="6.6" viewBox="0 0 6.6 6.6"><g fill="none" stroke="#888" stroke-width=".6"><rect x=".4" y="2.2" width="2.8" height="4"/><rect x="3.2" y=".4" width="3" height="2.6"/><rect x="3.2" y="3.4" width="3" height="2.8"/></g></svg>
<div class="it" style="top:23.2px;letter-spacing:.04px">Connect To Change Order</div>
</div>
<svg style="left:432.3px;top:102.6px" width="8" height="4" viewBox="0 0 8 4"><path d="M0 4L4 .3L8 4Z" fill="#fff"/></svg>
<div style="position:absolute;left:30px;top:543.3px;width:338.5px;height:4.1px;background:#75787b;border-radius:2px"></div>
<div style="position:absolute;left:514.1px;top:538px;width:18.8px;height:9.4px;background:#9aa0ab;border-radius:2px 2px 0 0"></div>
<svg style="left:519.5px;top:540.6px" width="8" height="5" viewBox="0 0 8 5"><path d="M.8 4L4 1L7.2 4" fill="none" stroke="#fff" stroke-width="1.1" stroke-linecap="round" stroke-linejoin="round"/></svg>
<div id="toast"><span style="position:absolute;left:13.5px;top:0">1 Object Selected</span><svg style="left:91.3px;top:9.2px" width="5.4" height="5.4" viewBox="0 0 6 6"><path d="M.6 .6L5.4 5.4M5.4 .6L.6 5.4" stroke="#f6c9cd" stroke-width=".8"/></svg></div>
</div>
</body></html>
